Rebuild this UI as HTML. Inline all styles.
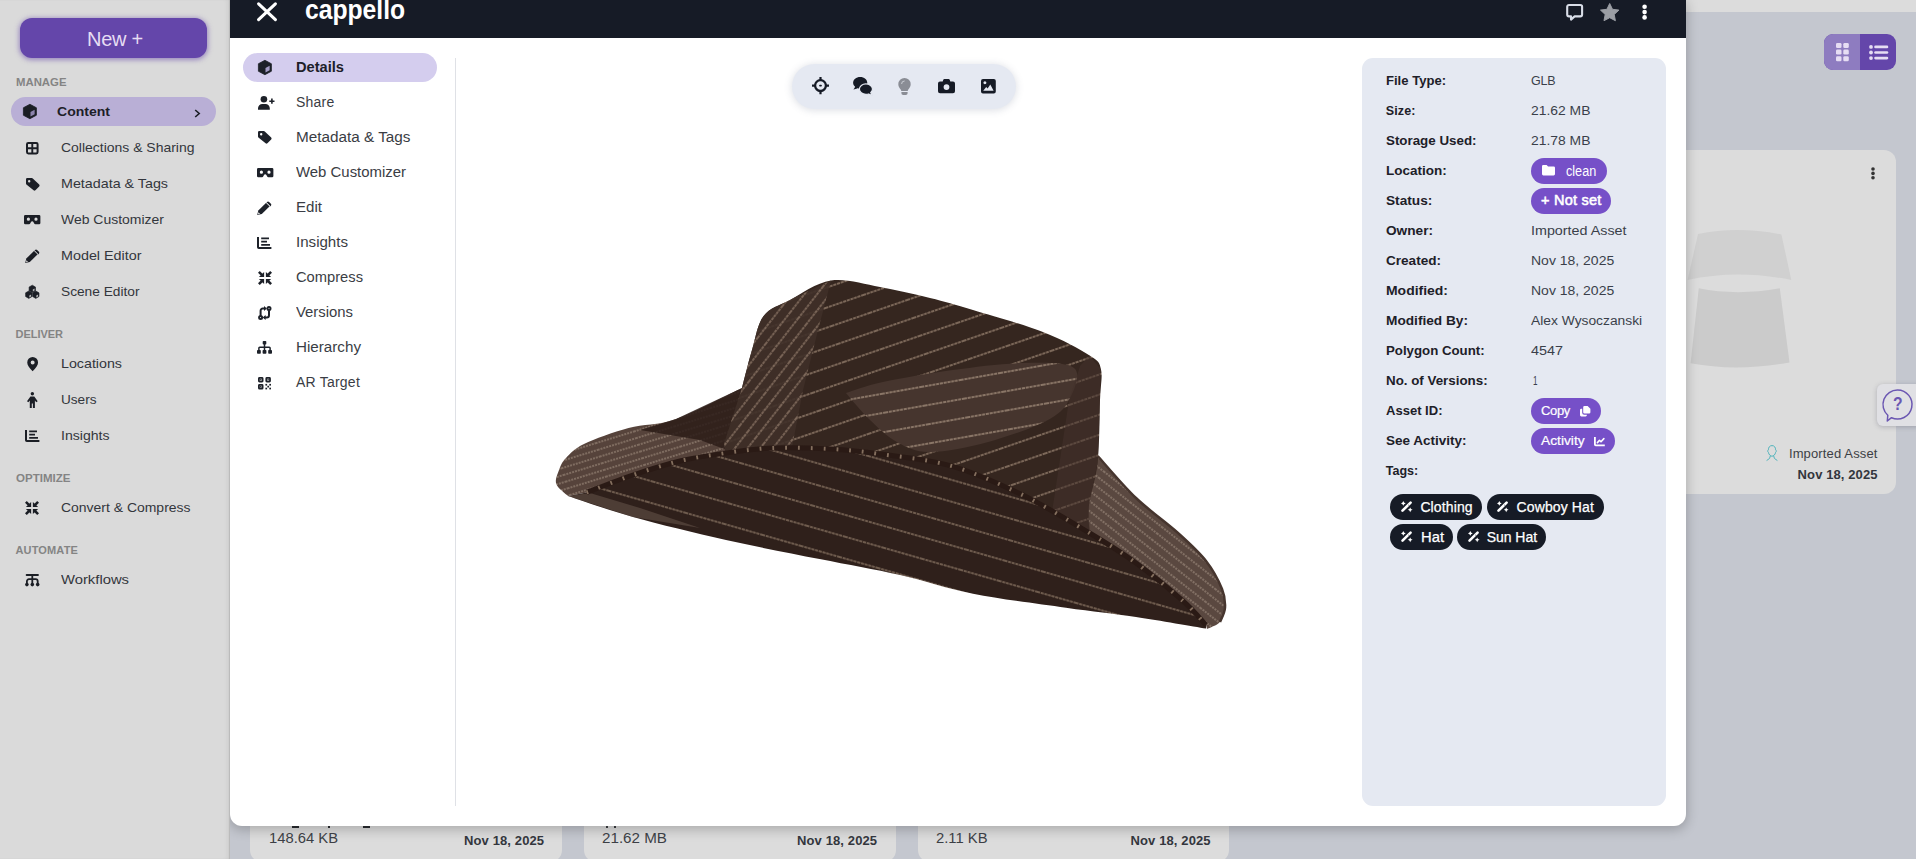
<!DOCTYPE html>
<html lang="en">
<head>
<meta charset="utf-8">
<title>cappello</title>
<style>
*{box-sizing:border-box;margin:0;padding:0}
html,body{width:1916px;height:859px;overflow:hidden}
body{position:relative;background:#c4c7cf;font-family:"Liberation Sans",sans-serif;color:#222}
.a{position:absolute}
.t{position:absolute;white-space:nowrap;line-height:20px;height:20px}
svg{position:absolute;overflow:visible}
#side{left:0;top:0;width:230px;height:859px;background:#dadada;box-shadow:inset -1px 0 1px rgba(0,0,0,.10),inset -5px 0 5px -3px rgba(0,0,0,.07)}
#topstrip{left:1686px;top:0;width:230px;height:12px;background:#dcdcdc}
#newbtn{left:20px;top:18px;width:187px;height:40px;border-radius:12px;background:#6446aa;box-shadow:0 1px 5px 1px rgba(100,70,170,.55)}
#contentpill{left:11px;top:97px;width:205px;height:29px;border-radius:15px;background:#b9afd6}
#modal{left:230px;top:0;width:1456px;height:826px;background:#fff;border-radius:0 0 12px 12px;box-shadow:0 3px 12px 1px rgba(0,0,0,.22)}
#hdr{left:230px;top:0;width:1456px;height:38px;background:#161b26}
#detpill{left:243px;top:53px;width:194px;height:29px;border-radius:15px;background:#d4cdee}
#divider{left:455px;top:58px;width:1px;height:748px;background:#dfe1e6}
#toolbar{left:792px;top:64px;width:224px;height:45px;border-radius:23px;background:#e5e9f2;box-shadow:0 1px 7px 1px rgba(90,100,130,.18)}
#info{left:1362px;top:58px;width:304px;height:748px;border-radius:11px;background:#e5e9f2}
.pp{position:absolute;height:25.5px;border-radius:13px;background:#7650c8}
.tg{position:absolute;height:25.5px;border-radius:13px;background:#161b26}
#card{left:1686px;top:150px;width:210px;height:344px;border-radius:0 12px 12px 0;background:#dcdcdc}
.bc{position:absolute;top:800px;height:62px;border-radius:12px;background:#dcdcdc}
#tgl{left:1824px;top:34px;width:72px;height:36px;border-radius:9px;background:#6446aa;overflow:hidden}
#tgl i{position:absolute;left:0;top:0;width:36px;height:36px;background:#8e7cc0}
#help{left:1877px;top:384px;width:45px;height:42px;border-radius:6px;background:#e0e0e4;box-shadow:0 1px 5px rgba(60,60,80,.28)}
</style>
</head>
<body>
<!-- background page -->
<div class="a" id="topstrip"></div>
<div class="bc" style="left:250px;width:312px"></div>
<div class="bc" style="left:584px;width:312px"></div>
<div class="bc" style="left:918px;width:311px"></div>
<div class="a" id="card"></div>
<div class="a" id="tgl"><i></i></div>
<div class="a" id="help"></div>
<svg style="left:1836.00px;top:43.10px" width="12.80" height="18.20" viewBox="0 0 12.8 18.2" ><rect x="0.0" y="0.0" width="5.5" height="5" rx="1.3" fill="#e6ddf3"/><rect x="7.3" y="0.0" width="5.5" height="5" rx="1.3" fill="#e6ddf3"/><rect x="0.0" y="6.6" width="5.5" height="5" rx="1.3" fill="#e6ddf3"/><rect x="7.3" y="6.6" width="5.5" height="5" rx="1.3" fill="#e6ddf3"/><rect x="0.0" y="13.2" width="5.5" height="5" rx="1.3" fill="#e6ddf3"/><rect x="7.3" y="13.2" width="5.5" height="5" rx="1.3" fill="#e6ddf3"/></svg>
<svg style="left:1869.00px;top:44.70px" width="19.20" height="15.00" viewBox="0 0 19.2 15" ><circle cx="2" cy="1.9" r="1.9" fill="#e6ddf3"/><path d="M6.5 1.9H18" stroke="#e6ddf3" stroke-width="2.6" stroke-linecap="round"/><circle cx="2" cy="7.5" r="1.9" fill="#e6ddf3"/><path d="M6.5 7.5H18" stroke="#e6ddf3" stroke-width="2.6" stroke-linecap="round"/><circle cx="2" cy="13.1" r="1.9" fill="#e6ddf3"/><path d="M6.5 13.1H18" stroke="#e6ddf3" stroke-width="2.6" stroke-linecap="round"/></svg>
<svg style="left:1870.60px;top:166.60px" width="4.00" height="12.80" viewBox="0 0 4 12.8" ><circle cx="2" cy="2" r="1.8" fill="#333"/><circle cx="2" cy="6.4" r="1.8" fill="#333"/><circle cx="2" cy="10.8" r="1.8" fill="#333"/></svg>
<svg style="left:1686.00px;top:225.00px" width="110.00" height="146.00" viewBox="1686 225 110 146" ><path d="M1698 234Q1737 226 1781.4 234.4L1791.3 280Q1737 269 1687.6 280Z" fill="#d0d0d0"/><path d="M1698.8 288.3Q1737 296 1779.8 288.3L1789.5 362.4Q1737 372 1690.6 363.3Z" fill="#cbcbcb"/></svg>
<svg style="left:1765.60px;top:445.40px" width="12.00" height="16.40" viewBox="0 0 12 16.4" ><path d="M6 .6C8.5 .6 9.6 2.6 9.6 4.8 10.4 5.4 10.6 6.6 9.6 7.4 9.2 9.6 7.6 11.2 6 11.2S2.8 9.6 2.4 7.4C1.4 6.600 1.6 5.400 2.4 4.800 2.400 2.600 3.500 .600 6 .600Z M4.400 10.600 3.600 13.400.600 15.600 M7.600 10.600 8.400 13.400 11.400 15.600" fill="none" stroke="#4fb3bb" stroke-width="1"/></svg>
<svg style="left:1882.00px;top:389.00px" width="31.00" height="33.00" viewBox="0 0 31 33" ><path d="M15.500 1A14.500 14.500 0 1 1 9.500 28.700L5.300 32 5.800 26.300A14.500 14.500 0 0 1 15.500 1Z" fill="none" stroke="#6b57b2" stroke-width="1.5" stroke-linejoin="round"/></svg>
<div class="a" style="left:292px;top:826px;width:7px;height:2px;background:#2a2c30"></div>
<div class="a" style="left:328px;top:826px;width:1.5px;height:2px;background:#2a2c30"></div>
<div class="a" style="left:363px;top:826px;width:7px;height:2px;background:#2a2c30"></div>
<div class="a" style="left:606px;top:826px;width:1.5px;height:1.5px;background:#3a3c40"></div>
<div class="a" style="left:614px;top:826px;width:1.5px;height:1.5px;background:#3a3c40"></div>
<!-- modal -->
<div class="a" id="modal"></div>
<!-- sidebar -->
<div class="a" id="side"></div>
<div class="a" id="newbtn"></div>
<div class="a" id="contentpill"></div>
<div class="a" id="hdr"></div>
<div class="a" id="detpill"></div>
<div class="a" id="divider"></div>
<div class="a" id="toolbar"></div>
<div class="a" id="info"></div>
<div class="pp" style="left:1531px;top:158px;width:76px"></div>
<div class="pp" style="left:1531px;top:188px;width:80px"></div>
<div class="pp" style="left:1531px;top:398px;width:70px"></div>
<div class="pp" style="left:1531px;top:428px;width:84px"></div>
<div class="tg" style="left:1390px;top:494px;width:92px"></div>
<div class="tg" style="left:1486.5px;top:494px;width:117.5px"></div>
<div class="tg" style="left:1390px;top:524px;width:63px"></div>
<div class="tg" style="left:1457px;top:524px;width:89px"></div>
<svg class="a" style="left:0;top:0" width="1916" height="859" viewBox="0 0 1916 859">
<defs>
<pattern id="sc" width="40" height="19" patternUnits="userSpaceOnUse" patternTransform="rotate(-19)"><rect width="40" height="19" fill="#35261f"/><line x1="0" y1="9" x2="40" y2="9" stroke="#937d6c" stroke-width="1.6" stroke-dasharray="3 .8"/></pattern>
<pattern id="scl" width="40" height="10" patternUnits="userSpaceOnUse" patternTransform="rotate(-52)"><rect width="40" height="10" fill="#3f2f28"/><line x1="0" y1="5" x2="40" y2="5" stroke="#917b6a" stroke-width="1.3" stroke-dasharray="3 .8"/></pattern>
<pattern id="sd" width="40" height="19" patternUnits="userSpaceOnUse" patternTransform="rotate(-10)"><rect width="40" height="19" fill="#46352e"/><line x1="0" y1="9" x2="40" y2="9" stroke="#a18b79" stroke-width="1.6" stroke-dasharray="3 .8"/></pattern>
<pattern id="su" width="40" height="21" patternUnits="userSpaceOnUse" patternTransform="rotate(16)"><rect width="40" height="21" fill="#2f201b"/><line x1="0" y1="10" x2="40" y2="10" stroke="#84705f" stroke-width="1.6" stroke-dasharray="3 .8"/></pattern>
<pattern id="sl" width="40" height="7" patternUnits="userSpaceOnUse" patternTransform="rotate(-17)"><rect width="40" height="7" fill="#56433b"/><line x1="0" y1="3" x2="40" y2="3" stroke="#a79585" stroke-width="1" stroke-dasharray="2 1"/></pattern>
<pattern id="sr" width="40" height="8" patternUnits="userSpaceOnUse" patternTransform="rotate(38)"><rect width="40" height="8" fill="#5a4840"/><line x1="0" y1="4" x2="40" y2="4" stroke="#a89687" stroke-width="1" stroke-dasharray="2 1"/></pattern>
</defs>
<path d="M568.0 496.0 C566.0 494.0 557.8 488.3 556.3 484.0 C554.8 479.7 557.4 474.3 559.0 470.0 C560.6 465.7 561.8 462.3 566.0 458.0 C570.2 453.7 573.6 449.0 584.0 444.0 C594.4 439.0 613.2 432.2 628.5 428.0 C643.8 423.8 657.1 425.7 676.0 419.0 C694.9 412.3 731.0 393.2 742.0 388.0 L728 440 L730 456 L726.0 453.0 C718.3 454.3 695.5 457.3 680.0 461.0 C664.5 464.7 648.6 469.8 633.0 475.0 C617.4 480.2 594.3 489.5 586.6 492.4 Z" fill="url(#sl)"/>
<path d="M742 388 L676 419 L640 430 L700 440 L727 450 Z" fill="#2c1c17" opacity=".85"/>
<path d="M1097.7 456.0 C1104.1 463.0 1122.6 485.2 1136.0 498.0 C1149.4 510.8 1166.3 522.5 1178.0 533.0 C1189.7 543.5 1198.7 551.7 1206.0 561.0 C1213.3 570.3 1218.8 581.2 1222.0 589.0 C1225.2 596.8 1225.3 602.2 1225.0 607.7 C1224.7 613.2 1223.0 618.5 1220.0 622.0 C1217.0 625.5 1209.2 627.8 1207.0 629.0 L1206.0 625.0 C1202.1 621.0 1194.4 611.0 1182.7 600.7 C1171.0 590.4 1151.5 574.3 1136.0 563.0 C1120.5 551.7 1097.3 538.0 1089.6 533.0 L1080 500 Z" fill="url(#sr)"/>
<path d="M1097.7 456.0 C1104.1 463.0 1122.6 485.2 1136.0 498.0 C1149.4 510.8 1166.3 522.5 1178.0 533.0 C1189.7 543.5 1198.7 551.7 1206.0 561.0 C1213.3 570.3 1218.8 581.2 1222.0 589.0 C1225.2 596.8 1225.3 602.2 1225.0 607.7 C1224.7 613.2 1220.8 619.6 1220.0 622.0" fill="none" stroke="#46352e" stroke-width="2.5" stroke-linejoin="round"/>
<path d="M742.0 388.0 C743.7 381.7 748.4 362.0 752.0 350.0 C755.6 338.0 757.3 324.3 763.6 316.0 C769.9 307.7 778.8 305.9 790.0 300.0 C801.2 294.1 816.0 282.7 831.0 280.5 C846.0 278.3 863.5 284.1 880.0 287.0 C896.5 289.9 914.5 294.2 930.0 298.0 C945.5 301.8 954.2 304.3 973.0 310.0 C991.8 315.7 1023.6 324.4 1043.0 332.0 C1062.4 339.6 1079.9 349.2 1089.6 355.5 C1099.3 361.8 1099.3 362.1 1101.0 369.5 C1102.7 376.9 1100.5 384.6 1100.0 400.0 C1099.5 415.4 1099.5 444.5 1097.7 462.0 C1095.9 479.5 1090.3 493.2 1089.0 505.0 C1087.7 516.8 1089.5 528.3 1089.6 533.0 L1089.6 533.0 C1077.9 526.4 1043.0 504.8 1019.7 493.6 C996.4 482.4 973.3 472.2 950.0 465.6 C926.7 459.0 899.8 456.8 880.0 454.0 C860.2 451.2 848.8 450.0 831.0 449.0 C813.2 448.0 790.5 447.3 773.0 448.0 C755.5 448.7 733.8 452.2 726.0 453.0 L724 444 Z" fill="url(#sc)"/>
<path d="M742.0 388.0 C743.7 381.7 748.4 362.0 752.0 350.0 C755.6 338.0 757.3 324.3 763.6 316.0 C769.9 307.7 778.8 305.9 790.0 300.0 C801.2 294.1 824.2 283.8 831.0 280.5 L818 330 L803 390 L792 447 L726 454 L724 444 Z" fill="url(#scl)" opacity=".9"/>
<path d="M846.0 393.0 C852.2 391.2 865.2 385.8 883.0 382.0 C900.8 378.2 929.7 373.2 953.0 370.0 C976.3 366.8 1002.8 363.3 1023.0 363.0 C1043.2 362.7 1066.3 361.8 1074.0 368.0 C1081.7 374.2 1073.7 391.2 1069.0 400.0 C1064.3 408.8 1059.5 414.0 1046.0 421.0 C1032.5 428.0 1007.3 436.8 988.0 442.0 C968.7 447.2 945.2 452.0 930.0 452.0 C914.8 452.0 907.2 447.5 897.0 442.0 C886.8 436.5 877.5 427.2 869.0 419.0 C860.5 410.8 849.8 397.3 846.0 393.0 Z" fill="url(#sd)"/>
<path d="M1101 369.5 L1100 400 L1097.7 462 L1089 505 L1089.6 533 L1052 512 L1069 400 L1080 366 L1089.6 355.5 Z" fill="#43322b" opacity=".55"/>
<path d="M586.6 492.4 C594.3 489.5 617.4 480.2 633.0 475.0 C648.6 469.8 664.5 464.7 680.0 461.0 C695.5 457.3 710.5 455.2 726.0 453.0 C741.5 450.8 755.5 448.7 773.0 448.0 C790.5 447.3 813.2 448.0 831.0 449.0 C848.8 450.0 860.2 451.2 880.0 454.0 C899.8 456.8 926.7 459.0 950.0 465.6 C973.3 472.2 996.4 482.4 1019.7 493.6 C1043.0 504.8 1070.2 521.4 1089.6 533.0 C1109.0 544.6 1120.5 551.7 1136.0 563.0 C1151.5 574.3 1171.0 590.4 1182.7 600.7 C1194.4 611.0 1202.1 621.0 1206.0 625.0 L1206.0 628.6 C1194.3 626.7 1159.3 620.5 1136.0 617.0 C1112.7 613.5 1093.2 611.6 1066.0 607.7 C1038.8 603.8 1000.7 599.2 973.0 593.7 C945.3 588.2 925.6 580.8 900.0 575.0 C874.4 569.2 848.5 564.8 819.5 559.0 C790.5 553.2 757.1 547.0 726.0 540.0 C694.9 533.0 659.3 524.3 633.0 517.0 C606.7 509.7 578.8 499.5 568.0 496.0 Z" fill="url(#su)"/>
<path d="M568 496 L590 493 L640 508 L700 528 L633 517 Z" fill="#6b5a50" opacity=".5"/>
<path d="M586.6 492.4 C594.3 489.5 617.4 480.2 633.0 475.0 C648.6 469.8 664.5 464.7 680.0 461.0 C695.5 457.3 710.5 455.2 726.0 453.0 C741.5 450.8 755.5 448.7 773.0 448.0 C790.5 447.3 813.2 448.0 831.0 449.0 C848.8 450.0 860.2 451.2 880.0 454.0 C899.8 456.8 926.7 459.0 950.0 465.6 C973.3 472.2 996.4 482.4 1019.7 493.6 C1043.0 504.8 1070.2 521.4 1089.6 533.0 C1109.0 544.6 1120.5 551.7 1136.0 563.0 C1151.5 574.3 1171.0 590.4 1182.7 600.7 C1194.4 611.0 1202.1 621.0 1206.0 625.0" fill="none" stroke="#2a1a15" stroke-width="5" stroke-linejoin="round"/>
<path d="M586.6 492.4 C594.3 489.5 617.4 480.2 633.0 475.0 C648.6 469.8 664.5 464.7 680.0 461.0 C695.5 457.3 710.5 455.2 726.0 453.0 C741.5 450.8 755.5 448.7 773.0 448.0 C790.5 447.3 813.2 448.0 831.0 449.0 C848.8 450.0 860.2 451.2 880.0 454.0 C899.8 456.8 926.7 459.0 950.0 465.6 C973.3 472.2 996.4 482.4 1019.7 493.6 C1043.0 504.8 1070.2 521.4 1089.6 533.0 C1109.0 544.6 1120.5 551.7 1136.0 563.0 C1151.5 574.3 1171.0 590.4 1182.7 600.7 C1194.4 611.0 1202.1 621.0 1206.0 625.0" fill="none" stroke="#85705f" stroke-width="4" stroke-dasharray="1.8 11" stroke-linejoin="round"/>
</svg>

<svg style="left:23.40px;top:104.10px" width="13.80" height="15.00" viewBox="0 0 14 15" ><path d="M7 .2 L13.6 3.7 V11.3 L7 14.8 L.4 11.3 V3.7Z" fill="#1b1e25" stroke="#1b1e25" stroke-width=".8" stroke-linejoin="round"/><path d="M7.6 8 L11.8 5.7 V10.3 L7.6 12.7Z" fill="#8c84ac"/></svg>
<svg style="left:194.00px;top:109.00px" width="7.00" height="9.00" viewBox="0 0 7 9" ><path d="M1.2 1L5.2 4.5 1.2 8" fill="none" stroke="#1b1e25" stroke-width="1.6"/></svg>
<svg style="left:26.00px;top:141.70px" width="12.60" height="12.40" viewBox="0 0 12.6 12.4" ><rect x="1" y="1" width="10.6" height="10.4" rx="1.3" fill="none" stroke="#1b1e25" stroke-width="2"/><path d="M6.3 1V11.4M1 6.2H11.6" stroke="#1b1e25" stroke-width="1.9" fill="none"/></svg>
<svg style="left:25.80px;top:177.70px" width="13.60" height="12.60" viewBox="0 0 13.6 12.6" ><path fill-rule="evenodd" fill="#1b1e25" d="M0 1.3A1.3 1.3 0 0 1 1.3 0H5.9a1.3 1.3 0 0 1 .9.4L13.2 6.6a1.3 1.3 0 0 1 0 1.8L9.4 12.2a1.3 1.3 0 0 1-1.8 0L.4 6.4A1.3 1.3 0 0 1 0 5.5ZM3.2 2A1.2 1.2 0 1 0 3.2 4.4 1.2 1.2 0 1 0 3.2 2Z"/></svg>
<svg style="left:24.20px;top:214.90px" width="16.40" height="9.20" viewBox="0 0 16.4 9.2" ><path fill-rule="evenodd" fill="#1b1e25" d="M1.3 0H15.1A1.3 1.3 0 0 1 16.4 1.3V7.9A1.3 1.3 0 0 1 15.1 9.2H11.4A1.3 1.3 0 0 1 10.2 8.5L9.4 6.9A1.35 1.35 0 0 0 7 6.9L6.2 8.5A1.3 1.3 0 0 1 5 9.2H1.3A1.3 1.3 0 0 1 0 7.9V1.3A1.3 1.3 0 0 1 1.3 0ZM4.4 2.6A1.6 1.6 0 1 0 4.4 5.8 1.6 1.6 0 1 0 4.4 2.6ZM12 2.6A1.6 1.6 0 1 0 12 5.8 1.6 1.6 0 1 0 12 2.6Z"/></svg>
<svg style="left:25.00px;top:248.90px" width="14.60" height="14.20" viewBox="0 0 14.6 14.2" ><path fill="#1b1e25" d="M.2 14 L1.3 9.6 L9.2 1.7 L12.7 5.2 L4.8 13.1Z"/><path fill="#1b1e25" d="M10 .9a1.5 1.5 0 0 1 2.1 0L13.9 2.7a1.5 1.5 0 0 1 0 2.1L13.3 5.4 9.4 1.5Z" /><path d="M9 1.3L13.1 5.4" stroke="#dadada" stroke-width=".9"/><path d="M1.5 11.2L3 12.7 1 13.3Z" fill="#dadada"/></svg>
<svg style="left:24.90px;top:284.80px" width="14.60" height="13.60" viewBox="0 0 14.6 13.6" ><polygon points="7.30,0.20 10.50,2.05 10.50,5.75 7.30,7.60 4.10,5.75 4.10,2.05" fill="#1b1e25" stroke="#1b1e25" stroke-width=".6" stroke-linejoin="round"/><polygon points="3.80,6.00 7.00,7.85 7.00,11.55 3.80,13.40 0.60,11.55 0.60,7.85" fill="#1b1e25" stroke="#1b1e25" stroke-width=".6" stroke-linejoin="round"/><polygon points="10.80,6.00 14.00,7.85 14.00,11.55 10.80,13.40 7.60,11.55 7.60,7.85" fill="#1b1e25" stroke="#1b1e25" stroke-width=".6" stroke-linejoin="round"/><path d="M7.8 4.6L9.6 3.6V5.6L7.8 6.6Z M4.3 10.4L6.1 9.4V11.4L4.3 12.4Z M11.3 10.4L13.1 9.4V11.4L11.3 12.4Z" fill="#dadada" opacity=".8"/></svg>
<svg style="left:26.65px;top:356.65px" width="11.30" height="14.30" viewBox="0 0 11.3 14.3" ><path fill-rule="evenodd" fill="#1b1e25" d="M5.65 0A5.4 5.4 0 0 1 11.05 5.4C11.05 7.9 9.2 10.4 5.65 14.3 2.1 10.4.25 7.9.25 5.4A5.4 5.4 0 0 1 5.65 0ZM5.65 3.4A2 2 0 1 0 5.65 7.4 2 2 0 1 0 5.65 3.4Z"/></svg>
<svg style="left:26.95px;top:391.65px" width="10.70" height="16.10" viewBox="0 0 10.7 16.1" ><circle cx="5.35" cy="1.7" r="1.7" fill="#1b1e25"/><path fill="#1b1e25" d="M3.4 4.6H7.3L10.7 9.2 9.3 10.2 7.9 8.4V16.1H5.9V11.6H4.8V16.1H2.8V8.4L1.4 10.2 0 9.2Z"/></svg>
<svg style="left:24.80px;top:429.70px" width="14.40" height="12.00" viewBox="0 0 14.4 12" ><path d="M1 0V10.2a.8.8 0 0 0 .8.8H14.4" fill="none" stroke="#1b1e25" stroke-width="2"/><path d="M4.2 1.4H12M4.2 4.6H10M4.2 7.8H13" stroke="#1b1e25" stroke-width="1.8" fill="none"/></svg>
<svg style="left:25.20px;top:500.80px" width="14.00" height="14.00" viewBox="0 0 14 14" ><path d="M.9 .9L4.400 4.400" stroke="#1b1e25" stroke-width="2.500"/><path d="M6.100 .9V6.100H.9Z" fill="#1b1e25"/><g transform="translate(14,0) scale(-1,1)"><path d="M.9 .9L4.400 4.400" stroke="#1b1e25" stroke-width="2.500"/><path d="M6.100 .9V6.100H.9Z" fill="#1b1e25"/></g><g transform="translate(0,14) scale(1,-1)"><path d="M.9 .9L4.400 4.400" stroke="#1b1e25" stroke-width="2.500"/><path d="M6.100 .9V6.100H.9Z" fill="#1b1e25"/></g><g transform="translate(14,14) scale(-1,-1)"><path d="M.9 .9L4.400 4.400" stroke="#1b1e25" stroke-width="2.500"/><path d="M6.100 .9V6.100H.9Z" fill="#1b1e25"/></g></svg>
<svg style="left:24.90px;top:573.70px" width="14.60" height="12.40" viewBox="0 0 14.6 12.4" ><g fill="none" stroke="#1b1e25" stroke-width="1.8"><path d="M1.6 1H13" stroke-linecap="round"/><path d="M7.3 1V10"/><path d="M1.9 10V7.2A2 2 0 0 1 3.9 5.2H10.7A2 2 0 0 1 12.7 7.2V10"/></g><circle cx="1.9" cy="10.6" r="1.8" fill="#1b1e25"/><circle cx="7.3" cy="10.6" r="1.8" fill="#1b1e25"/><circle cx="12.7" cy="10.6" r="1.8" fill="#1b1e25"/></svg>
<svg style="left:257.70px;top:60.30px" width="13.80" height="15.00" viewBox="0 0 14 15" ><path d="M7 .2 L13.6 3.7 V11.3 L7 14.8 L.4 11.3 V3.7Z" fill="#1d2129" stroke="#1d2129" stroke-width=".8" stroke-linejoin="round"/><path d="M7.6 8 L11.8 5.7 V10.3 L7.6 12.7Z" fill="#a49cc6"/></svg>
<svg style="left:258.00px;top:96.05px" width="16.80" height="13.70" viewBox="0 0 16.8 13.7" ><circle cx="5.9" cy="3.3" r="3.3" fill="#1d2129"/><path d="M0 13.7V12.3A4.3 4.3 0 0 1 4.3 8H7.5A4.3 4.3 0 0 1 11.8 12.3V13.7Z" fill="#1d2129"/><path d="M13.9 2.6V7.8M11.3 5.2H16.5" stroke="#1d2129" stroke-width="1.6" fill="none"/></svg>
<svg style="left:258.20px;top:131.30px" width="13.60" height="12.60" viewBox="0 0 13.6 12.6" ><path fill-rule="evenodd" fill="#1d2129" d="M0 1.3A1.3 1.3 0 0 1 1.3 0H5.9a1.3 1.3 0 0 1 .9.4L13.2 6.6a1.3 1.3 0 0 1 0 1.8L9.4 12.2a1.3 1.3 0 0 1-1.8 0L.4 6.4A1.3 1.3 0 0 1 0 5.5ZM3.2 2A1.2 1.2 0 1 0 3.2 4.4 1.2 1.2 0 1 0 3.2 2Z"/></svg>
<svg style="left:256.80px;top:167.90px" width="16.40" height="9.20" viewBox="0 0 16.4 9.2" ><path fill-rule="evenodd" fill="#1d2129" d="M1.3 0H15.1A1.3 1.3 0 0 1 16.4 1.3V7.9A1.3 1.3 0 0 1 15.1 9.2H11.4A1.3 1.3 0 0 1 10.2 8.5L9.4 6.9A1.35 1.35 0 0 0 7 6.9L6.2 8.5A1.3 1.3 0 0 1 5 9.2H1.3A1.3 1.3 0 0 1 0 7.9V1.3A1.3 1.3 0 0 1 1.3 0ZM4.4 2.6A1.6 1.6 0 1 0 4.4 5.8 1.6 1.6 0 1 0 4.4 2.6ZM12 2.6A1.6 1.6 0 1 0 12 5.8 1.6 1.6 0 1 0 12 2.6Z"/></svg>
<svg style="left:257.30px;top:200.70px" width="14.60" height="14.20" viewBox="0 0 14.6 14.2" ><path fill="#1d2129" d="M.2 14 L1.3 9.6 L9.2 1.7 L12.7 5.2 L4.8 13.1Z"/><path fill="#1d2129" d="M10 .9a1.5 1.5 0 0 1 2.1 0L13.9 2.7a1.5 1.5 0 0 1 0 2.1L13.3 5.4 9.4 1.5Z" /><path d="M9 1.3L13.1 5.4" stroke="#fff" stroke-width=".9"/><path d="M1.5 11.2L3 12.7 1 13.3Z" fill="#fff"/></svg>
<svg style="left:257.30px;top:236.80px" width="14.40" height="12.00" viewBox="0 0 14.4 12" ><path d="M1 0V10.2a.8.8 0 0 0 .8.8H14.4" fill="none" stroke="#1d2129" stroke-width="2"/><path d="M4.2 1.4H12M4.2 4.6H10M4.2 7.8H13" stroke="#1d2129" stroke-width="1.8" fill="none"/></svg>
<svg style="left:257.70px;top:270.80px" width="14.00" height="14.00" viewBox="0 0 14 14" ><path d="M.9 .9L4.400 4.400" stroke="#1d2129" stroke-width="2.500"/><path d="M6.100 .9V6.100H.9Z" fill="#1d2129"/><g transform="translate(14,0) scale(-1,1)"><path d="M.9 .9L4.400 4.400" stroke="#1d2129" stroke-width="2.500"/><path d="M6.100 .9V6.100H.9Z" fill="#1d2129"/></g><g transform="translate(0,14) scale(1,-1)"><path d="M.9 .9L4.400 4.400" stroke="#1d2129" stroke-width="2.500"/><path d="M6.100 .9V6.100H.9Z" fill="#1d2129"/></g><g transform="translate(14,14) scale(-1,-1)"><path d="M.9 .9L4.400 4.400" stroke="#1d2129" stroke-width="2.500"/><path d="M6.100 .9V6.100H.9Z" fill="#1d2129"/></g></svg>
<svg style="left:258.00px;top:306.00px" width="13.60" height="14.00" viewBox="0 0 13.6 14" ><g fill="none" stroke="#1d2129" stroke-width="2"><circle cx="11" cy="2.500" r="1.500"/><circle cx="2.600" cy="11.500" r="1.500"/><path d="M2.600 9.800V4.700A2.200 2.200 0 0 1 4.800 2.500H6.600"/><path d="M11 4.200V9.300A2.200 2.200 0 0 1 8.800 11.500H7"/></g><path d="M6 0L8.900 2.500 6 5Z M7.600 9L4.700 11.500 7.600 14Z" fill="#1d2129"/></svg>
<svg style="left:257.00px;top:341.30px" width="15.00" height="12.80" viewBox="0 0 15 12.8" ><rect x="5.7" y="0" width="3.6" height="3.6" rx=".8" fill="#1d2129"/><rect x="0" y="8.9" width="3.8" height="3.9" rx=".8" fill="#1d2129"/><rect x="5.6" y="8.9" width="3.8" height="3.9" rx=".8" fill="#1d2129"/><rect x="11.2" y="8.9" width="3.8" height="3.9" rx=".8" fill="#1d2129"/><path d="M7.5 3V9.2M1.9 9.2V7A.8.8 0 0 1 2.7 6.2H12.3A.8.8 0 0 1 13.1 7V9.2" fill="none" stroke="#1d2129" stroke-width="1.5"/></svg>
<svg style="left:257.90px;top:376.60px" width="13.00" height="12.40" viewBox="0 0 13 12.4" ><rect x="0.9" y="0.9" width="3.7" height="3.7" rx=".6" fill="none" stroke="#1d2129" stroke-width="1.8"/><rect x="2.1" y="2.1" width="1.3" height="1.3" fill="#1d2129"/><rect x="8.3" y="0.9" width="3.7" height="3.7" rx=".6" fill="none" stroke="#1d2129" stroke-width="1.8"/><rect x="9.5" y="2.1" width="1.3" height="1.3" fill="#1d2129"/><rect x="0.9" y="7.800000000000001" width="3.7" height="3.7" rx=".6" fill="none" stroke="#1d2129" stroke-width="1.8"/><rect x="2.1" y="9.0" width="1.3" height="1.3" fill="#1d2129"/><rect x="7.4" y="6.9" width="1.7" height="1.7" fill="#1d2129"/><rect x="11.3" y="6.9" width="1.7" height="1.7" fill="#1d2129"/><rect x="9.35" y="8.8" width="1.7" height="1.7" fill="#1d2129"/><rect x="7.4" y="10.7" width="1.7" height="1.7" fill="#1d2129"/><rect x="11.3" y="10.7" width="1.7" height="1.7" fill="#1d2129"/></svg>
<svg style="left:257.00px;top:2.00px" width="20.00" height="19.00" viewBox="0 0 20 19" ><path d="M1.6 1.8L18.4 17.6M18.4 1.8L1.6 17.6" stroke="#fff" stroke-width="3.1" stroke-linecap="round"/></svg>
<svg style="left:1565.00px;top:3.40px" width="20.00" height="19.00" viewBox="0 0 20 19" ><path d="M4 2H15.3A1.8 1.8 0 0 1 17.1 3.8V11.6A1.8 1.8 0 0 1 15.3 13.4H9.6L6 16.6V13.4H4A1.8 1.8 0 0 1 2.2 11.6V3.8A1.8 1.8 0 0 1 4 2Z" fill="none" stroke="#d9dee8" stroke-width="2.1" stroke-linejoin="round"/></svg>
<svg style="left:1600.00px;top:2.60px" width="19.40" height="18.00" viewBox="0 0 19.4 18" ><path d="M9.7 .5L12.5 6.3 18.9 7.1 14.2 11.5 15.4 17.7 9.7 14.7 4 17.7 5.2 11.5 .5 7.1 6.9 6.3Z" fill="#9b9ea4" stroke="#9b9ea4" stroke-width="1" stroke-linejoin="round"/></svg>
<svg style="left:1642.00px;top:4.00px" width="5.20" height="16.40" viewBox="0 0 5.2 16.4" ><circle cx="2.6" cy="2.8" r="2.3" fill="#fff"/><circle cx="2.6" cy="8.1" r="2.3" fill="#fff"/><circle cx="2.6" cy="13.4" r="2.3" fill="#fff"/></svg>
<svg style="left:812.00px;top:77.00px" width="17.00" height="17.20" viewBox="0 0 17 17.2" ><circle cx="8.5" cy="8.6" r="5.4" fill="none" stroke="#161b26" stroke-width="2.3"/><path d="M8.5 0V3.6M8.5 13.6V17.2M0 8.6H3.6M13.4 8.6H17" stroke="#161b26" stroke-width="2.2" fill="none"/><rect x="7.1" y="7.7" width="2.8" height="1.8" rx=".9" fill="#161b26"/></svg>
<svg style="left:852.60px;top:76.60px" width="19.60" height="18.40" viewBox="0 0 19.6 18.4" ><path d="M7.2 0C11.2 0 14.3 2.6 14.3 5.8S11.2 11.6 7.2 11.6C6.2 11.6 5.3 11.4 4.4 11.2 3.3 11.9 1.9 12.4.4 12.4 1.3 11.5 1.9 10.5 2.1 9.7.8 8.7.1 7.3.1 5.8.1 2.6 3.2 0 7.2 0Z" fill="#161b26"/><path d="M12.9 6.9C16.5 6.9 19.5 9.2 19.5 12.1 19.5 13.4 18.9 14.6 17.8 15.5 18 16.3 18.5 17.3 19.4 18.2 18 18.2 16.6 17.7 15.6 17 14.8 17.2 13.9 17.3 12.9 17.3 9.3 17.3 6.4 15 6.4 12.1S9.3 6.9 12.9 6.9Z" fill="#161b26" stroke="#e5e9f2" stroke-width="1.2"/></svg>
<svg style="left:898.00px;top:77.60px" width="13.00" height="17.20" viewBox="0 0 13 17.2" ><path d="M6.5 0A6.2 6.2 0 0 1 12.7 6.2C12.7 8.6 11.3 10 10.3 11.4 9.9 12 9.8 12.6 9.8 13H3.2C3.2 12.6 3.1 12 2.7 11.4 1.7 10 .3 8.6.3 6.2A6.2 6.2 0 0 1 6.5 0Z" fill="#8a8d95"/><path d="M3.4 14.1H9.6V15.2A1.8 1.8 0 0 1 7.8 17H5.2A1.8 1.8 0 0 1 3.4 15.2Z" fill="#8a8d95"/><path d="M3.6 6A3 3 0 0 1 6.6 3" fill="none" stroke="#c9ccd3" stroke-width="1"/></svg>
<svg style="left:938.00px;top:79.00px" width="17.00" height="14.20" viewBox="0 0 17 14.2" ><path fill-rule="evenodd" d="M5.2 .9A1.3 1.3 0 0 1 6.4 0H10.6A1.3 1.3 0 0 1 11.8 .9L12.3 2.4H15A2 2 0 0 1 17 4.4V12.2A2 2 0 0 1 15 14.2H2A2 2 0 0 1 0 12.2V4.4A2 2 0 0 1 2 2.4H4.7ZM8.5 5.2A2.9 2.9 0 1 0 8.5 11 2.9 2.9 0 1 0 8.5 5.2Z" fill="#161b26"/></svg>
<svg style="left:981.20px;top:78.80px" width="14.80" height="14.40" viewBox="0 0 14.8 14.4" ><path fill-rule="evenodd" d="M2 0H12.8A2 2 0 0 1 14.8 2V12.4A2 2 0 0 1 12.8 14.4H2A2 2 0 0 1 0 12.4V2A2 2 0 0 1 2 0ZM3.9 2.3A1.5 1.5 0 1 0 3.9 5.3 1.5 1.5 0 1 0 3.9 2.3ZM2.2 11.8H12.6L9.3 5.6 6.6 9.6 5.2 7.9Z" fill="#161b26"/></svg>
<svg style="left:1542.00px;top:164.80px" width="13.00" height="10.40" viewBox="0 0 13 10.4" ><path d="M1.3 0H4.6L6.1 1.5H11.7A1.3 1.3 0 0 1 13 2.8V9.1A1.3 1.3 0 0 1 11.7 10.4H1.3A1.3 1.3 0 0 1 0 9.1V1.3A1.3 1.3 0 0 1 1.3 0Z" fill="#fff"/></svg>
<svg style="left:1579.80px;top:405.90px" width="10.40" height="10.40" viewBox="0 0 10.4 10.4" ><path d="M2.2 2.8H1.3A1.3 1.3 0 0 0 0 4.1V9.1A1.3 1.3 0 0 0 1.3 10.4H5.6A1.3 1.3 0 0 0 6.9 9.1V8.7H4.2A2 2 0 0 1 2.2 6.7Z" fill="#fff"/><path d="M4.5 0H7.6L10.4 2.8V6.3A1.3 1.3 0 0 1 9.1 7.6H4.5A1.3 1.3 0 0 1 3.2 6.3V1.3A1.3 1.3 0 0 1 4.5 0Z" fill="#fff"/></svg>
<svg style="left:1594.00px;top:436.80px" width="10.80" height="9.20" viewBox="0 0 10.8 9.2" ><path d="M.9 0V7.5A.8.8 0 0 0 1.7 8.3H10.8" fill="none" stroke="#fff" stroke-width="1.8"/><path d="M3.4 5.6L5.5 3.3 7 4.8 9.9 1.6" fill="none" stroke="#fff" stroke-width="1.6" stroke-linejoin="round" stroke-linecap="round"/></svg>
<svg style="left:1400.50px;top:501.20px" width="11.60" height="11.20" viewBox="0 0 11.6 11.2" ><path d="M1.5 9.7L9.6 1.6" stroke="#fff" stroke-width="2.6" stroke-linecap="round"/><path d="M7.3 3.9L8.4 5" stroke="#161b26" stroke-width=".7"/><path d="M2.300 0L3.100 1.600 4.700 2.400 3.100 3.200 2.300 4.800 1.500 3.200 0 2.400 1.500 1.600Z M9.200 6.400L10 8 11.600 8.800 10 9.600 9.200 11.200 8.400 9.600 6.800 8.800 8.400 8Z" fill="#fff"/></svg>
<svg style="left:1497.00px;top:501.20px" width="11.60" height="11.20" viewBox="0 0 11.6 11.2" ><path d="M1.5 9.7L9.6 1.6" stroke="#fff" stroke-width="2.6" stroke-linecap="round"/><path d="M7.3 3.9L8.4 5" stroke="#161b26" stroke-width=".7"/><path d="M2.300 0L3.100 1.600 4.700 2.400 3.100 3.200 2.300 4.800 1.500 3.200 0 2.400 1.500 1.600Z M9.200 6.400L10 8 11.600 8.800 10 9.600 9.200 11.200 8.400 9.600 6.800 8.800 8.400 8Z" fill="#fff"/></svg>
<svg style="left:1400.50px;top:531.00px" width="11.60" height="11.20" viewBox="0 0 11.6 11.2" ><path d="M1.5 9.7L9.6 1.6" stroke="#fff" stroke-width="2.6" stroke-linecap="round"/><path d="M7.3 3.9L8.4 5" stroke="#161b26" stroke-width=".7"/><path d="M2.300 0L3.100 1.600 4.700 2.400 3.100 3.200 2.300 4.800 1.500 3.200 0 2.400 1.500 1.600Z M9.200 6.400L10 8 11.600 8.800 10 9.600 9.200 11.200 8.400 9.600 6.800 8.800 8.400 8Z" fill="#fff"/></svg>
<svg style="left:1467.60px;top:531.00px" width="11.60" height="11.20" viewBox="0 0 11.6 11.2" ><path d="M1.5 9.7L9.6 1.6" stroke="#fff" stroke-width="2.6" stroke-linecap="round"/><path d="M7.3 3.9L8.4 5" stroke="#161b26" stroke-width=".7"/><path d="M2.300 0L3.100 1.600 4.700 2.400 3.100 3.200 2.300 4.800 1.500 3.200 0 2.400 1.500 1.600Z M9.200 6.400L10 8 11.600 8.800 10 9.600 9.200 11.200 8.400 9.600 6.800 8.800 8.400 8Z" fill="#fff"/></svg>
<span class="t" id="t0" style="left:87px;top:29px;font-size:20px;font-weight:400;color:#e6ddf3;letter-spacing:-0.250px;">New +</span>
<span class="t" id="t1" style="left:15.5px;top:72px;font-size:11px;font-weight:700;color:#848484;transform-origin:0 50%;transform:scaleX(1.0329);">MANAGE</span>
<span class="t" id="t2" style="left:57px;top:102px;font-size:13px;font-weight:700;color:#1d2028;transform-origin:0 50%;transform:scaleX(1.0792);">Content</span>
<span class="t" id="t3" style="left:61px;top:138px;font-size:13px;font-weight:400;color:#33363c;transform-origin:0 50%;transform:scaleX(1.0740);">Collections &amp; Sharing</span>
<span class="t" id="t4" style="left:61px;top:174px;font-size:13px;font-weight:400;color:#33363c;transform-origin:0 50%;transform:scaleX(1.0994);">Metadata &amp; Tags</span>
<span class="t" id="t5" style="left:61px;top:210px;font-size:13px;font-weight:400;color:#33363c;transform-origin:0 50%;transform:scaleX(1.0747);">Web Customizer</span>
<span class="t" id="t6" style="left:61px;top:246px;font-size:13px;font-weight:400;color:#33363c;transform-origin:0 50%;transform:scaleX(1.1030);">Model Editor</span>
<span class="t" id="t7" style="left:61px;top:282px;font-size:13px;font-weight:400;color:#33363c;transform-origin:0 50%;transform:scaleX(1.0546);">Scene Editor</span>
<span class="t" id="t8" style="left:15.5px;top:324px;font-size:11px;font-weight:700;color:#848484;letter-spacing:-0.027px;">DELIVER</span>
<span class="t" id="t9" style="left:61px;top:354px;font-size:13px;font-weight:400;color:#33363c;transform-origin:0 50%;transform:scaleX(1.0960);">Locations</span>
<span class="t" id="t10" style="left:61px;top:390px;font-size:13px;font-weight:400;color:#33363c;transform-origin:0 50%;transform:scaleX(1.0456);">Users</span>
<span class="t" id="t11" style="left:61px;top:426px;font-size:13px;font-weight:400;color:#33363c;transform-origin:0 50%;transform:scaleX(1.0823);">Insights</span>
<span class="t" id="t12" style="left:15.5px;top:468px;font-size:11px;font-weight:700;color:#848484;transform-origin:0 50%;transform:scaleX(1.0490);">OPTIMIZE</span>
<span class="t" id="t13" style="left:61px;top:498px;font-size:13px;font-weight:400;color:#33363c;transform-origin:0 50%;transform:scaleX(1.0733);">Convert &amp; Compress</span>
<span class="t" id="t14" style="left:15.5px;top:540px;font-size:11px;font-weight:700;color:#848484;letter-spacing:0.148px;">AUTOMATE</span>
<span class="t" id="t15" style="left:61px;top:570px;font-size:13px;font-weight:400;color:#33363c;transform-origin:0 50%;transform:scaleX(1.1387);">Workflows</span>
<span class="t" id="t16" style="left:305.4px;top:0px;font-size:27px;font-weight:700;color:#ffffff;transform-origin:0 50%;transform:scaleX(0.9139);">cappello</span>
<span class="t" id="t17" style="left:296px;top:57px;font-size:14px;font-weight:700;color:#1d2028;transform-origin:0 50%;transform:scaleX(1.0453);">Details</span>
<span class="t" id="t18" style="left:296px;top:92px;font-size:14px;font-weight:400;color:#3a3d44;letter-spacing:0.228px;">Share</span>
<span class="t" id="t19" style="left:296px;top:127px;font-size:14px;font-weight:400;color:#3a3d44;transform-origin:0 50%;transform:scaleX(1.0924);">Metadata &amp; Tags</span>
<span class="t" id="t20" style="left:296px;top:162px;font-size:14px;font-weight:400;color:#3a3d44;transform-origin:0 50%;transform:scaleX(1.0657);">Web Customizer</span>
<span class="t" id="t21" style="left:296px;top:197px;font-size:14px;font-weight:400;color:#3a3d44;transform-origin:0 50%;transform:scaleX(1.0777);">Edit</span>
<span class="t" id="t22" style="left:296px;top:232px;font-size:14px;font-weight:400;color:#3a3d44;transform-origin:0 50%;transform:scaleX(1.0777);">Insights</span>
<span class="t" id="t23" style="left:296px;top:267px;font-size:14px;font-weight:400;color:#3a3d44;transform-origin:0 50%;transform:scaleX(1.0502);">Compress</span>
<span class="t" id="t24" style="left:296px;top:302px;font-size:14px;font-weight:400;color:#3a3d44;transform-origin:0 50%;transform:scaleX(1.0614);">Versions</span>
<span class="t" id="t25" style="left:296px;top:337px;font-size:14px;font-weight:400;color:#3a3d44;transform-origin:0 50%;transform:scaleX(1.0850);">Hierarchy</span>
<span class="t" id="t26" style="left:296px;top:372px;font-size:14px;font-weight:400;color:#3a3d44;letter-spacing:0.222px;">AR Target</span>
<span class="t" id="t27" style="left:1385.7px;top:71px;font-size:12.5px;font-weight:700;color:#1d2028;transform-origin:0 50%;transform:scaleX(1.0449);">File Type:</span>
<span class="t" id="t28" style="left:1385.7px;top:101px;font-size:12.5px;font-weight:700;color:#1d2028;letter-spacing:0.163px;">Size:</span>
<span class="t" id="t29" style="left:1385.7px;top:131px;font-size:12.5px;font-weight:700;color:#1d2028;transform-origin:0 50%;transform:scaleX(1.0678);">Storage Used:</span>
<span class="t" id="t30" style="left:1385.7px;top:161px;font-size:12.5px;font-weight:700;color:#1d2028;transform-origin:0 50%;transform:scaleX(1.0791);">Location:</span>
<span class="t" id="t31" style="left:1385.7px;top:191px;font-size:12.5px;font-weight:700;color:#1d2028;transform-origin:0 50%;transform:scaleX(1.0926);">Status:</span>
<span class="t" id="t32" style="left:1385.7px;top:221px;font-size:12.5px;font-weight:700;color:#1d2028;transform-origin:0 50%;transform:scaleX(1.0914);">Owner:</span>
<span class="t" id="t33" style="left:1385.7px;top:251px;font-size:12.5px;font-weight:700;color:#1d2028;transform-origin:0 50%;transform:scaleX(1.0844);">Created:</span>
<span class="t" id="t34" style="left:1385.7px;top:281px;font-size:12.5px;font-weight:700;color:#1d2028;transform-origin:0 50%;transform:scaleX(1.1162);">Modified:</span>
<span class="t" id="t35" style="left:1385.7px;top:311px;font-size:12.5px;font-weight:700;color:#1d2028;transform-origin:0 50%;transform:scaleX(1.0933);">Modified By:</span>
<span class="t" id="t36" style="left:1385.7px;top:341px;font-size:12.5px;font-weight:700;color:#1d2028;transform-origin:0 50%;transform:scaleX(1.0597);">Polygon Count:</span>
<span class="t" id="t37" style="left:1385.7px;top:371px;font-size:12.5px;font-weight:700;color:#1d2028;transform-origin:0 50%;transform:scaleX(1.0677);">No. of Versions:</span>
<span class="t" id="t38" style="left:1385.7px;top:401px;font-size:12.5px;font-weight:700;color:#1d2028;transform-origin:0 50%;transform:scaleX(1.0427);">Asset ID:</span>
<span class="t" id="t39" style="left:1385.7px;top:431px;font-size:12.5px;font-weight:700;color:#1d2028;transform-origin:0 50%;transform:scaleX(1.0807);">See Activity:</span>
<span class="t" id="t40" style="left:1385.7px;top:461px;font-size:12.5px;font-weight:700;color:#1d2028;letter-spacing:0.016px;">Tags:</span>
<span class="t" id="t41" style="left:1531px;top:71px;font-size:12.5px;font-weight:400;color:#3a3f4a;letter-spacing:-0.272px;">GLB</span>
<span class="t" id="t42" style="left:1531px;top:101px;font-size:12.5px;font-weight:400;color:#3a3f4a;transform-origin:0 50%;transform:scaleX(1.1100);">21.62 MB</span>
<span class="t" id="t43" style="left:1531px;top:131px;font-size:12.5px;font-weight:400;color:#3a3f4a;transform-origin:0 50%;transform:scaleX(1.1100);">21.78 MB</span>
<span class="t" id="t44" style="left:1531px;top:221px;font-size:12.5px;font-weight:400;color:#3a3f4a;transform-origin:0 50%;transform:scaleX(1.1454);">Imported Asset</span>
<span class="t" id="t45" style="left:1531px;top:251px;font-size:12.5px;font-weight:400;color:#3a3f4a;transform-origin:0 50%;transform:scaleX(1.1189);">Nov 18, 2025</span>
<span class="t" id="t46" style="left:1531px;top:281px;font-size:12.5px;font-weight:400;color:#3a3f4a;transform-origin:0 50%;transform:scaleX(1.1189);">Nov 18, 2025</span>
<span class="t" id="t47" style="left:1531px;top:311px;font-size:12.5px;font-weight:400;color:#3a3f4a;transform-origin:0 50%;transform:scaleX(1.1051);">Alex Wysoczanski</span>
<span class="t" id="t48" style="left:1531px;top:341px;font-size:12.5px;font-weight:400;color:#3a3f4a;transform-origin:0 50%;transform:scaleX(1.1506);">4547</span>
<span class="t" id="t49" style="left:1532.5px;top:371px;font-size:12.5px;font-weight:400;color:#3a3f4a;transform-origin:0 50%;transform:scaleX(0.6472);">1</span>
<span class="t" id="t50" style="left:1566.2px;top:161px;font-size:14px;font-weight:400;color:#ffffff;transform-origin:0 50%;transform:scaleX(0.9023);">clean</span>
<span class="t" id="t51" style="left:1541px;top:190px;font-size:14.5px;font-weight:400;color:#ffffff;-webkit-text-stroke:.55px #fff;letter-spacing:0.240px;">+ Not set</span>
<span class="t" id="t52" style="left:1540.9px;top:401px;font-size:13px;font-weight:400;color:#ffffff;-webkit-text-stroke:.2px #fff;letter-spacing:-0.315px;">Copy</span>
<span class="t" id="t53" style="left:1540.9px;top:431px;font-size:13px;font-weight:400;color:#ffffff;-webkit-text-stroke:.2px #fff;transform-origin:0 50%;transform:scaleX(1.0590);">Activity</span>
<span class="t" id="t54" style="left:1420.4px;top:497px;font-size:14px;font-weight:400;color:#ffffff;-webkit-text-stroke:.25px #fff;letter-spacing:0.116px;">Clothing</span>
<span class="t" id="t55" style="left:1516.5px;top:497px;font-size:14px;font-weight:400;color:#ffffff;-webkit-text-stroke:.25px #fff;letter-spacing:0.123px;">Cowboy Hat</span>
<span class="t" id="t56" style="left:1420.9px;top:527px;font-size:14px;font-weight:400;color:#ffffff;-webkit-text-stroke:.25px #fff;transform-origin:0 50%;transform:scaleX(1.0552);">Hat</span>
<span class="t" id="t57" style="left:1486.7px;top:527px;font-size:14px;font-weight:400;color:#ffffff;-webkit-text-stroke:.25px #fff;letter-spacing:-0.042px;">Sun Hat</span>
<span class="t" id="t58" style="left:1788.9px;top:444px;font-size:13px;font-weight:400;color:#3c3f45;letter-spacing:0.142px;">Imported Asset</span>
<span class="t" id="t59" style="left:1797.6px;top:465px;font-size:13px;font-weight:700;color:#33363d;letter-spacing:0.102px;">Nov 18, 2025</span>
<span class="t" id="t60" style="left:268.9px;top:828px;font-size:14px;font-weight:400;color:#3c3f45;transform-origin:0 50%;transform:scaleX(1.0552);">148.64 KB</span>
<span class="t" id="t61" style="left:601.8px;top:828px;font-size:14px;font-weight:400;color:#3c3f45;transform-origin:0 50%;transform:scaleX(1.0845);">21.62 MB</span>
<span class="t" id="t62" style="left:936px;top:828px;font-size:14px;font-weight:400;color:#3c3f45;transform-origin:0 50%;transform:scaleX(1.0578);">2.11 KB</span>
<span class="t" id="t63" style="left:464px;top:831px;font-size:13px;font-weight:700;color:#33363d;letter-spacing:0.118px;">Nov 18, 2025</span>
<span class="t" id="t64" style="left:797px;top:831px;font-size:13px;font-weight:700;color:#33363d;letter-spacing:0.118px;">Nov 18, 2025</span>
<span class="t" id="t65" style="left:1130.5px;top:831px;font-size:13px;font-weight:700;color:#33363d;letter-spacing:0.118px;">Nov 18, 2025</span>
<span class="t" id="t66" style="left:1893.2px;top:394px;font-size:19px;font-weight:700;color:#6b57b2;transform-origin:0 50%;transform:scaleX(0.8269);">?</span>
</body>
</html>
